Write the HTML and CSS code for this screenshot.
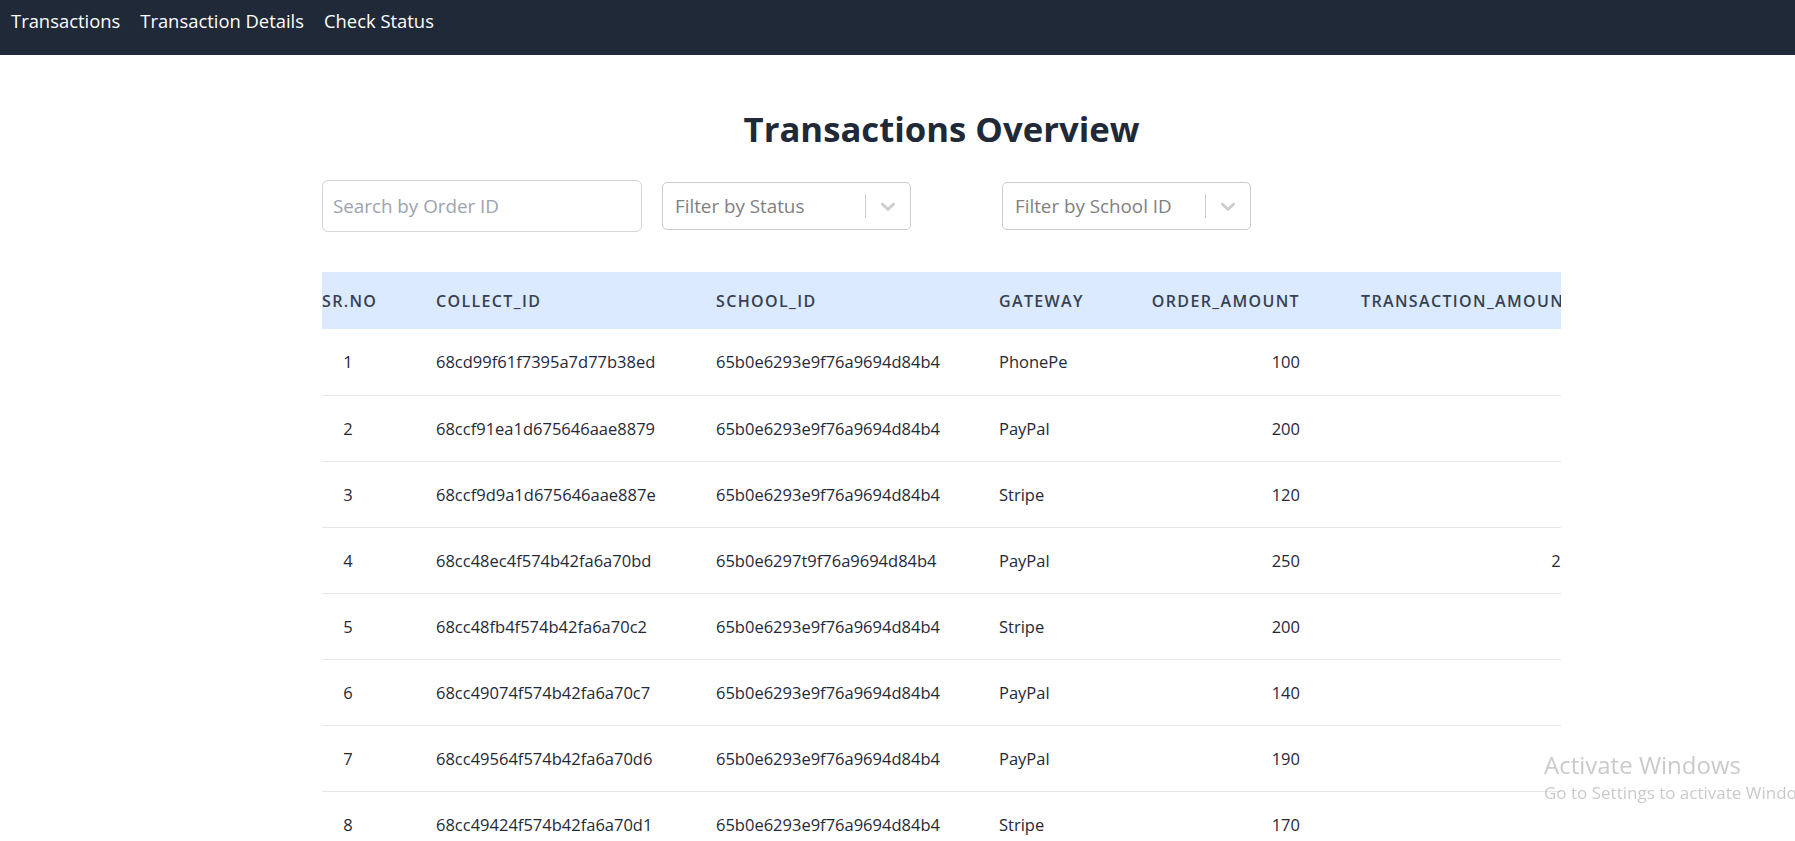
FILE: index.html
```html
<!DOCTYPE html>
<html lang="en">
<head>
<meta charset="utf-8">
<title>Transactions Overview</title>
<link rel="stylesheet" href="styles.css">
</head>
<body>
<nav class="navbar">
  <a class="nav-link" href="#">Transactions</a>
  <a class="nav-link" href="#">Transaction Details</a>
  <a class="nav-link" href="#">Check Status</a>
</nav>

<main class="page">
  <div class="content">
    <h1 class="title">Transactions Overview</h1>

    <div class="filters">
      <div class="filter-cell">
        <input class="search-input" type="text" placeholder="Search by Order ID">
      </div>
      <div class="filter-cell">
        <div class="select">
          <span class="select-placeholder">Filter by Status</span>
          <span class="select-sep"></span>
          <svg class="select-chevron" viewBox="0 0 20 20" aria-hidden="true"><path d="M4.516 7.548c0.436-0.446 1.043-0.481 1.576 0l3.908 3.747 3.908-3.747c0.533-0.481 1.141-0.446 1.574 0 0.436 0.445 0.408 1.197 0 1.615-0.406 0.418-4.695 4.502-4.695 4.502-0.217 0.223-0.502 0.335-0.787 0.335s-0.57-0.112-0.789-0.335c0 0-4.287-4.084-4.695-4.502s-0.436-1.170 0-1.615z"/></svg>
        </div>
      </div>
      <div class="filter-cell">
        <div class="select">
          <span class="select-placeholder">Filter by School ID</span>
          <span class="select-sep"></span>
          <svg class="select-chevron" viewBox="0 0 20 20" aria-hidden="true"><path d="M4.516 7.548c0.436-0.446 1.043-0.481 1.576 0l3.908 3.747 3.908-3.747c0.533-0.481 1.141-0.446 1.574 0 0.436 0.445 0.408 1.197 0 1.615-0.406 0.418-4.695 4.502-4.695 4.502-0.217 0.223-0.502 0.335-0.787 0.335s-0.57-0.112-0.789-0.335c0 0-4.287-4.084-4.695-4.502s-0.436-1.170 0-1.615z"/></svg>
        </div>
      </div>
    </div>

    <div class="table-wrap">
      <table class="tx-table">
        <colgroup>
          <col class="w-sr"><col class="w-collect"><col class="w-school"><col class="w-gateway"><col class="w-order"><col class="w-txn"><col class="w-status"><col class="w-custom">
        </colgroup>
        <thead>
          <tr>
            <th class="c-sr">SR.NO</th>
            <th>COLLECT_ID</th>
            <th>SCHOOL_ID</th>
            <th>GATEWAY</th>
            <th class="num">ORDER_AMOUNT</th>
            <th class="c-txn">TRANSACTION_AMOUNT</th>
            <th>STATUS</th>
            <th>CUSTOM_ORDER_ID</th>
          </tr>
        </thead>
        <tbody>
          <tr><td class="c-sr">1</td><td>68cd99f61f7395a7d77b38ed</td><td>65b0e6293e9f76a9694d84b4</td><td>PhonePe</td><td class="num">100</td><td class="num">100</td><td>success</td><td>ORD-1001</td></tr>
          <tr><td class="c-sr">2</td><td>68ccf91ea1d675646aae8879</td><td>65b0e6293e9f76a9694d84b4</td><td>PayPal</td><td class="num">200</td><td class="num">200</td><td>success</td><td>ORD-1002</td></tr>
          <tr><td class="c-sr">3</td><td>68ccf9d9a1d675646aae887e</td><td>65b0e6293e9f76a9694d84b4</td><td>Stripe</td><td class="num">120</td><td class="num">120</td><td>pending</td><td>ORD-1003</td></tr>
          <tr><td class="c-sr">4</td><td>68cc48ec4f574b42fa6a70bd</td><td>65b0e6297t9f76a9694d84b4</td><td>PayPal</td><td class="num">250</td><td class="num">2500</td><td>success</td><td>ORD-1004</td></tr>
          <tr><td class="c-sr">5</td><td>68cc48fb4f574b42fa6a70c2</td><td>65b0e6293e9f76a9694d84b4</td><td>Stripe</td><td class="num">200</td><td class="num">200</td><td>failed</td><td>ORD-1005</td></tr>
          <tr><td class="c-sr">6</td><td>68cc49074f574b42fa6a70c7</td><td>65b0e6293e9f76a9694d84b4</td><td>PayPal</td><td class="num">140</td><td class="num">140</td><td>success</td><td>ORD-1006</td></tr>
          <tr><td class="c-sr">7</td><td>68cc49564f574b42fa6a70d6</td><td>65b0e6293e9f76a9694d84b4</td><td>PayPal</td><td class="num">190</td><td class="num">190</td><td>success</td><td>ORD-1007</td></tr>
          <tr><td class="c-sr">8</td><td>68cc49424f574b42fa6a70d1</td><td>65b0e6293e9f76a9694d84b4</td><td>Stripe</td><td class="num">170</td><td class="num">170</td><td>pending</td><td>ORD-1008</td></tr>
        </tbody>
      </table>
    </div>
  </div>
</main>

<div class="watermark">
  <div class="wm-title">Activate Windows</div>
  <div class="wm-sub">Go to Settings to activate Windows.</div>
</div>
</body>
</html>
```

FILE: styles.css
```css
html {
  scrollbar-width: none;
}
html::-webkit-scrollbar {
  display: none;
}

body {
  margin: 0;
  font-family: "Open Sans", "Noto Sans", "Liberation Sans", sans-serif;
  color: #1f2937;
  background: #ffffff;
}

.navbar {
  height: 55px;
  background: #1f2937;
  display: flex;
  align-items: flex-start;
  gap: 20px;
  padding: 7px 0 0 11px;
  box-sizing: border-box;
}

.nav-link {
  color: #ffffff;
  text-decoration: none;
  font-size: 18.4px;
  line-height: 28px;
}

.page {
  padding: 54px 0 0 322px;
}

.content {
  width: 1239px;
}

.title {
  margin: 0 0 31px;
  text-align: center;
  font-size: 34.7px;
  line-height: 40px;
  font-weight: 700;
  color: #1f2937;
}

.filters {
  display: flex;
  align-items: center;
  gap: 20px;
}

.filter-cell {
  width: 320px;
}

.search-input {
  display: block;
  width: 100%;
  height: 52px;
  box-sizing: border-box;
  border: 1px solid #d1d5db;
  border-radius: 6px;
  padding: 0 10px;
  font-family: inherit;
  font-size: 18.8px;
  color: #1f2937;
  outline: none;
}

.search-input::placeholder {
  color: #9ca3af;
}

.select {
  width: 249px;
  height: 48px;
  box-sizing: border-box;
  border: 1px solid #cccccc;
  border-radius: 5px;
  display: flex;
  align-items: center;
  padding: 0 10px 0 12px;
}

.select-placeholder {
  flex: 1;
  font-size: 18.8px;
  color: #808080;
  white-space: nowrap;
}

.select-sep {
  width: 1px;
  height: 24px;
  background: #cccccc;
  margin-right: 10px;
}

.select-chevron {
  width: 24px;
  height: 24px;
  fill: #cccccc;
}

.table-wrap {
  margin-top: 40px;
  overflow: hidden;
}

.tx-table {
  border-collapse: collapse;
  table-layout: fixed;
  width: 1900px;
  font-size: 16.5px;
}

.w-sr { width: 102px; }
.w-collect { width: 280px; }
.w-school { width: 283px; }
.w-gateway { width: 133px; }
.w-order { width: 192px; }
.w-txn { width: 289px; }
.w-status { width: 200px; }
.w-custom { width: 421px; }

.tx-table th {
  height: 57px;
  background: #dbeafe;
  color: #374151;
  font-size: 16px;
  font-weight: 600;
  text-align: left;
  padding: 0 12px;
  white-space: nowrap;
  letter-spacing: 0.085em;
}

.tx-table td {
  height: 66px;
  box-sizing: border-box;
  padding: 0 12px;
  border-bottom: 1px solid #e5e7eb;
  color: #1f2937;
  white-space: nowrap;
}

.tx-table .c-sr {
  padding: 0 50px 0 0;
  text-align: center;
}

.tx-table .num {
  text-align: right;
}

.tx-table th.c-txn {
  padding-left: 49px;
}

.watermark {
  position: fixed;
  left: 1544px;
  right: 0;
  top: 747px;
  overflow: hidden;
  white-space: nowrap;
  font-family: "Open Sans", "Noto Sans", sans-serif;
  color: rgba(150, 150, 150, 0.5);
  pointer-events: none;
}

.wm-title {
  font-size: 24px;
  line-height: 35px;
}

.wm-sub {
  font-size: 17px;
  line-height: 22px;
}
```
